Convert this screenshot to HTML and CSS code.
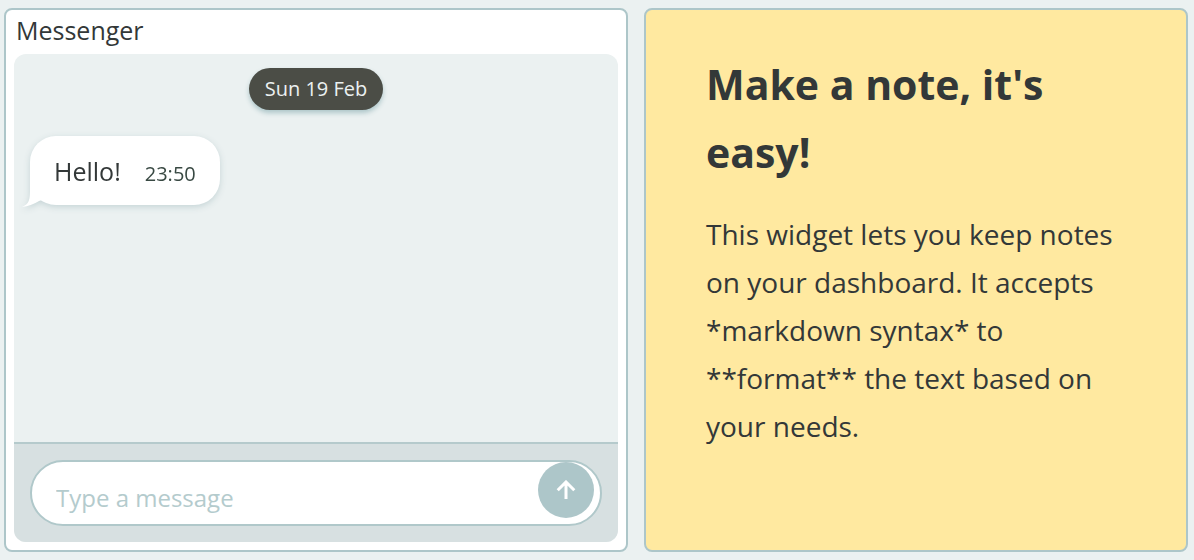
FILE: index.html
```html
<!DOCTYPE html>
<html lang="en">
<head>
<meta charset="utf-8">
<meta name="viewport" content="width=device-width, initial-scale=1">
<title>Dashboard</title>
<link rel="stylesheet" href="styles.css">
</head>
<body>
<main class="dashboard">
  <section class="card messenger" aria-labelledby="messenger-title">
    <h2 class="card-title" id="messenger-title">Messenger</h2>
    <div class="chat">
      <div class="chat-log">
        <time class="day" datetime="2023-02-19">Sun 19 Feb</time>
        <div class="bubble">
          <svg class="bubble-tail" viewBox="0 0 22 30" aria-hidden="true"><path d="M8 0V12C8 22 7 26 0 29Q9 28 17 23L20 22V0Z" fill="#fff"/></svg>
          <span class="bubble-text">Hello!</span>
          <time class="bubble-time" datetime="23:50">23:50</time>
        </div>
      </div>
      <form class="composer">
        <div class="field">
          <input class="field-input" type="text" aria-label="Message" placeholder="Type a message">
          <button class="send" type="button" aria-label="Send">
            <svg class="send-icon" viewBox="0 0 20 20" aria-hidden="true"><path d="M10 19V2M1.700 10.300L10 2L18.300 10.300" fill="none" stroke="#fff" stroke-width="3"/></svg>
          </button>
        </div>
      </form>
    </div>
  </section>
  <article class="card note">
    <h1 class="note-title">Make a note, it's easy!</h1>
    <p class="note-text">This widget lets you keep notes on your dashboard. It accepts *markdown syntax* to **format** the text based on your needs.</p>
  </article>
</main>
</body>
</html>
```
FILE: styles.css
```css
* {
  box-sizing: border-box;
}

body {
  margin: 0;
  background: #ebf1f1;
  color: #333838;
  font-family: "Open Sans", "Noto Sans", sans-serif;
}

.dashboard {
  display: grid;
  grid-template-columns: 624fr 544fr;
  gap: 16px;
  min-height: 100vh;
  padding: 8px 6px 8px 4px;
}

.card {
  border: 2px solid #adc6c9;
  border-radius: 8px;
}

.messenger {
  display: flex;
  flex-direction: column;
  padding: 2px 8px 8px;
  background: #fff;
}

.card-title {
  margin: 0;
  padding: 0 2px 6px;
  font-size: 25px;
  font-weight: 400;
  line-height: 36px;
}

.chat {
  display: flex;
  flex: 1;
  flex-direction: column;
  overflow: hidden;
  border-radius: 12px;
  background: #ebf1f1;
}

.chat-log {
  display: flex;
  flex: 1;
  flex-direction: column;
  align-items: flex-start;
  gap: 26px;
  padding: 14px 16px;
}

.day {
  align-self: center;
  padding: 0 16px;
  border-radius: 21px;
  background: #4b4d46;
  box-shadow: 0 3px 5px #adc6c9;
  color: #ebf1f1;
  font-size: 20px;
  line-height: 42px;
}

.bubble {
  position: relative;
  display: flex;
  align-items: baseline;
  gap: 24px;
  padding: 17px 24px 16px;
  border-radius: 26px;
  background: #fff;
  filter: drop-shadow(0 2px 3px #c5d4d6);
}

.bubble-tail {
  position: absolute;
  bottom: -3px;
  left: -8px;
  width: 22px;
  height: 30px;
}

.bubble-text {
  font-size: 25px;
  line-height: 36px;
}

.bubble-time {
  color: #394943;
  font-size: 20px;
}

.composer {
  padding: 16px;
  border-top: 2px solid #b5cacc;
  background: #d7e0e1;
}

.field {
  display: flex;
  align-items: flex-start;
  height: 66px;
  padding-right: 6px;
  border: 2px solid #b0c8ca;
  border-radius: 33px;
  background: #fff;
}

.field-input {
  flex: 1;
  min-width: 0;
  align-self: stretch;
  padding: 8px 0 0 24px;
  border: 0;
  outline: 0;
  background: transparent;
  color: inherit;
  font: inherit;
  font-size: 24px;
}

.field-input::placeholder {
  color: #b4cbcd;
  opacity: 1;
}

.send {
  display: grid;
  place-items: center;
  width: 56px;
  height: 56px;
  padding: 0;
  border: 0;
  border-radius: 50%;
  background: #adc6c9;
}

.send-icon {
  width: 20px;
  height: 20px;
}

.note {
  padding: 40px 60px;
  background: #ffe9a0;
}

.note-title {
  margin: 0 0 24px;
  font-size: 41px;
  font-weight: 700;
  line-height: 68px;
}

.note-text {
  margin: 0;
  font-size: 28px;
  line-height: 48px;
}
```
